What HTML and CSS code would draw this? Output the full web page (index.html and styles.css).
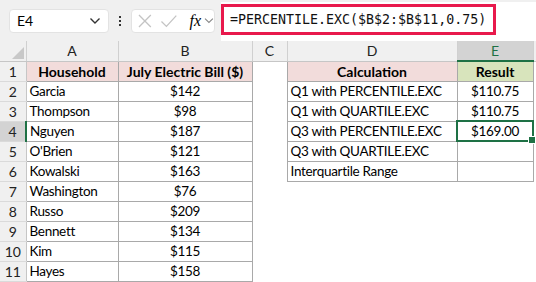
FILE: index.html
```html
<!DOCTYPE html>
<html lang="en">
<head>
  <meta charset="UTF-8" />
  <title>Quartiles</title>
  <link rel="stylesheet" href="styles.css">
</head>
<body>
  <div class="toolbar">
    <div class="namebox">
      <span>E4</span>
      <svg class="chev" width="12" height="8" viewBox="0 0 12 8"><path d="M1.5 1.5 L6 6 L10.5 1.5" fill="none" stroke="#333" stroke-width="1.4"/></svg>
    </div>
    <div class="dots"><i></i><i></i><i></i></div>
    <div class="fxbox">
      <svg width="16" height="16" viewBox="0 0 16 16"><path d="M2 2 L14 14 M14 2 L2 14" stroke="#c4c4c4" stroke-width="1.3"/></svg>
      <svg width="18" height="16" viewBox="0 0 18 16"><path d="M1.5 8.5 L6.5 13.5 L16.5 2.5" fill="none" stroke="#c4c4c4" stroke-width="1.3"/></svg>
      <span class="fx">fx</span>
      <svg width="10" height="7" viewBox="0 0 10 7"><path d="M1 1.5 L5 5.5 L9 1.5" fill="none" stroke="#888" stroke-width="1.1"/></svg>
    </div>
    <div class="formula">
      <div class="formula-text">=PERCENTILE.EXC($B$2:$B$11,0.75)</div>
    </div>
  </div>

  <table class="sheet">
    <colgroup>
      <col style="width:26px"><col style="width:92px"><col style="width:134px"><col style="width:35px"><col style="width:170px"><col style="width:76px"><col>
    </colgroup>
    <tr class="colhead">
      <th class="corner"><span class="tri"></span></th>
      <th>A</th><th>B</th><th>C</th><th>D</th><th class="sel">E</th><th class="blank"></th>
    </tr>
    <tr>
      <th class="rh">1</th>
      <td class="b hdr pink">Household</td><td class="b hdr pink">July Electric Bill ($)</td><td></td>
      <td class="b hdr pink">Calculation</td><td class="b hdr green">Result</td><td></td>
    </tr>
    <tr>
      <th class="rh">2</th>
      <td class="b">Garcia</td><td class="b c">$142</td><td></td>
      <td class="b">Q1 with PERCENTILE.EXC</td><td class="b c">$110.75</td><td></td>
    </tr>
    <tr>
      <th class="rh">3</th>
      <td class="b">Thompson</td><td class="b c">$98</td><td></td>
      <td class="b">Q1 with QUARTILE.EXC</td><td class="b c">$110.75</td><td></td>
    </tr>
    <tr>
      <th class="rh rsel">4</th>
      <td class="b">Nguyen</td><td class="b c">$187</td><td></td>
      <td class="b">Q3 with PERCENTILE.EXC</td><td class="b c active">$169.00<span class="handle"></span></td><td></td>
    </tr>
    <tr>
      <th class="rh">5</th>
      <td class="b">O'Brien</td><td class="b c">$121</td><td></td>
      <td class="b">Q3 with QUARTILE.EXC</td><td class="b c"></td><td></td>
    </tr>
    <tr>
      <th class="rh">6</th>
      <td class="b">Kowalski</td><td class="b c">$163</td><td></td>
      <td class="b">Interquartile Range</td><td class="b c"></td><td></td>
    </tr>
    <tr>
      <th class="rh">7</th>
      <td class="b">Washington</td><td class="b c">$76</td><td></td><td></td><td></td><td></td>
    </tr>
    <tr>
      <th class="rh">8</th>
      <td class="b">Russo</td><td class="b c">$209</td><td></td><td></td><td></td><td></td>
    </tr>
    <tr>
      <th class="rh">9</th>
      <td class="b">Bennett</td><td class="b c">$134</td><td></td><td></td><td></td><td></td>
    </tr>
    <tr>
      <th class="rh">10</th>
      <td class="b">Kim</td><td class="b c">$115</td><td></td><td></td><td></td><td></td>
    </tr>
    <tr>
      <th class="rh">11</th>
      <td class="b">Hayes</td><td class="b c">$158</td><td></td><td></td><td></td><td></td>
    </tr>
  </table>
</body>
</html>
```

FILE: styles.css
```css
body {
  margin: 0;
  width: 536px;
  height: 282px;
  overflow: hidden;
  background: white;
  font-family: 'Lato', 'Liberation Sans', sans-serif;
  color: #000;
}
.toolbar {
  height: 41px;
  background: #f0f0f0;
  display: flex;
  align-items: center;
  box-sizing: border-box;
  padding-left: 9px;
}
.namebox {
  width: 100px;
  height: 24px;
  box-sizing: border-box;
  background: white;
  border: 1px solid #e3e3e3;
  border-radius: 4px;
  display: flex;
  align-items: center;
  justify-content: space-between;
  padding: 0 7px 0 7px;
  font-size: 14px;
}
.dots {
  width: 22px;
  display: flex;
  flex-direction: column;
  align-items: center;
  gap: 2px;
}
.dots i {
  width: 2px;
  height: 2px;
  background: #333;
}
.fxbox {
  width: 84px;
  height: 24px;
  box-sizing: border-box;
  background: white;
  border: 1px solid #e3e3e3;
  border-radius: 4px;
  display: flex;
  align-items: center;
  padding-left: 5px;
  gap: 7px;
}
.fx {
  font-family: 'Liberation Serif', serif;
  font-style: italic;
  font-size: 16px;
  margin-left: 5px;
  margin-right: -4px;
}
.formula {
  margin-left: 6px;
  flex: 1;
  height: 41px;
  background: white;
  border-top: 2px solid #f0f0f0;
  box-sizing: border-box;
  padding-top: 2px;
}
.formula-text {
  width: 275px;
  height: 31px;
  box-sizing: border-box;
  border: 3px solid #e8194c;
  padding-left: 6px;
  font-family: 'DejaVu Sans Mono', monospace;
  font-size: 13.3px;
  line-height: 25px;
  color: #111;
}
.sheet {
  border-collapse: collapse;
  table-layout: fixed;
  width: 536px;
}
.sheet th, .sheet td {
  height: 20px;
  padding: 0 3px;
  font-size: 13.5px;
  letter-spacing: -0.3px;
  white-space: nowrap;
  overflow: visible;
  box-sizing: border-box;
}
.colhead th {
  background: #f0f0f0;
  font-weight: normal;
  text-align: center;
  border-right: 1px solid #d0d0d0;
  border-bottom: 1px solid #c6c6c6;
  color: #222;
  font-size: 14px;
  letter-spacing: 0;
}
.colhead th.blank {
  border-right: none;
}
.colhead th.sel {
  background: #d3d3d3;
  color: #1e7145;
  border-bottom: 2px solid #1e7145;
}
.corner {
  position: relative;
}
.tri {
  position: absolute;
  right: 2px;
  bottom: 2px;
  width: 0;
  height: 0;
  border-left: 12px solid transparent;
  border-bottom: 12px solid #c8c8c8;
}
.sheet .rh {
  background: #f0f0f0;
  font-weight: normal;
  text-align: center;
  padding: 0;
  border-right: 1px solid #c6c6c6;
  border-bottom: 1px solid #dadada;
  color: #222;
  font-size: 14px;
  letter-spacing: 0;
}
.sheet .rh.rsel {
  background: #d3d3d3;
  border-right: 2px solid #1e7145;
}
.b {
  border: 1px solid #a9a9a9;
}
.c {
  text-align: center;
}
.sheet .hdr {
  font-weight: bold;
  text-align: center;
  font-size: 14px;
  letter-spacing: 0;
}
.pink {
  background: #f2dcdb;
}
.green {
  background: #d8e4bc;
}
.active {
  border: 2px solid #1e7145;
  position: relative;
}
.handle {
  position: absolute;
  right: -4px;
  bottom: -4px;
  width: 6px;
  height: 6px;
  background: #1e7145;
  border: 1px solid white;
}
```
